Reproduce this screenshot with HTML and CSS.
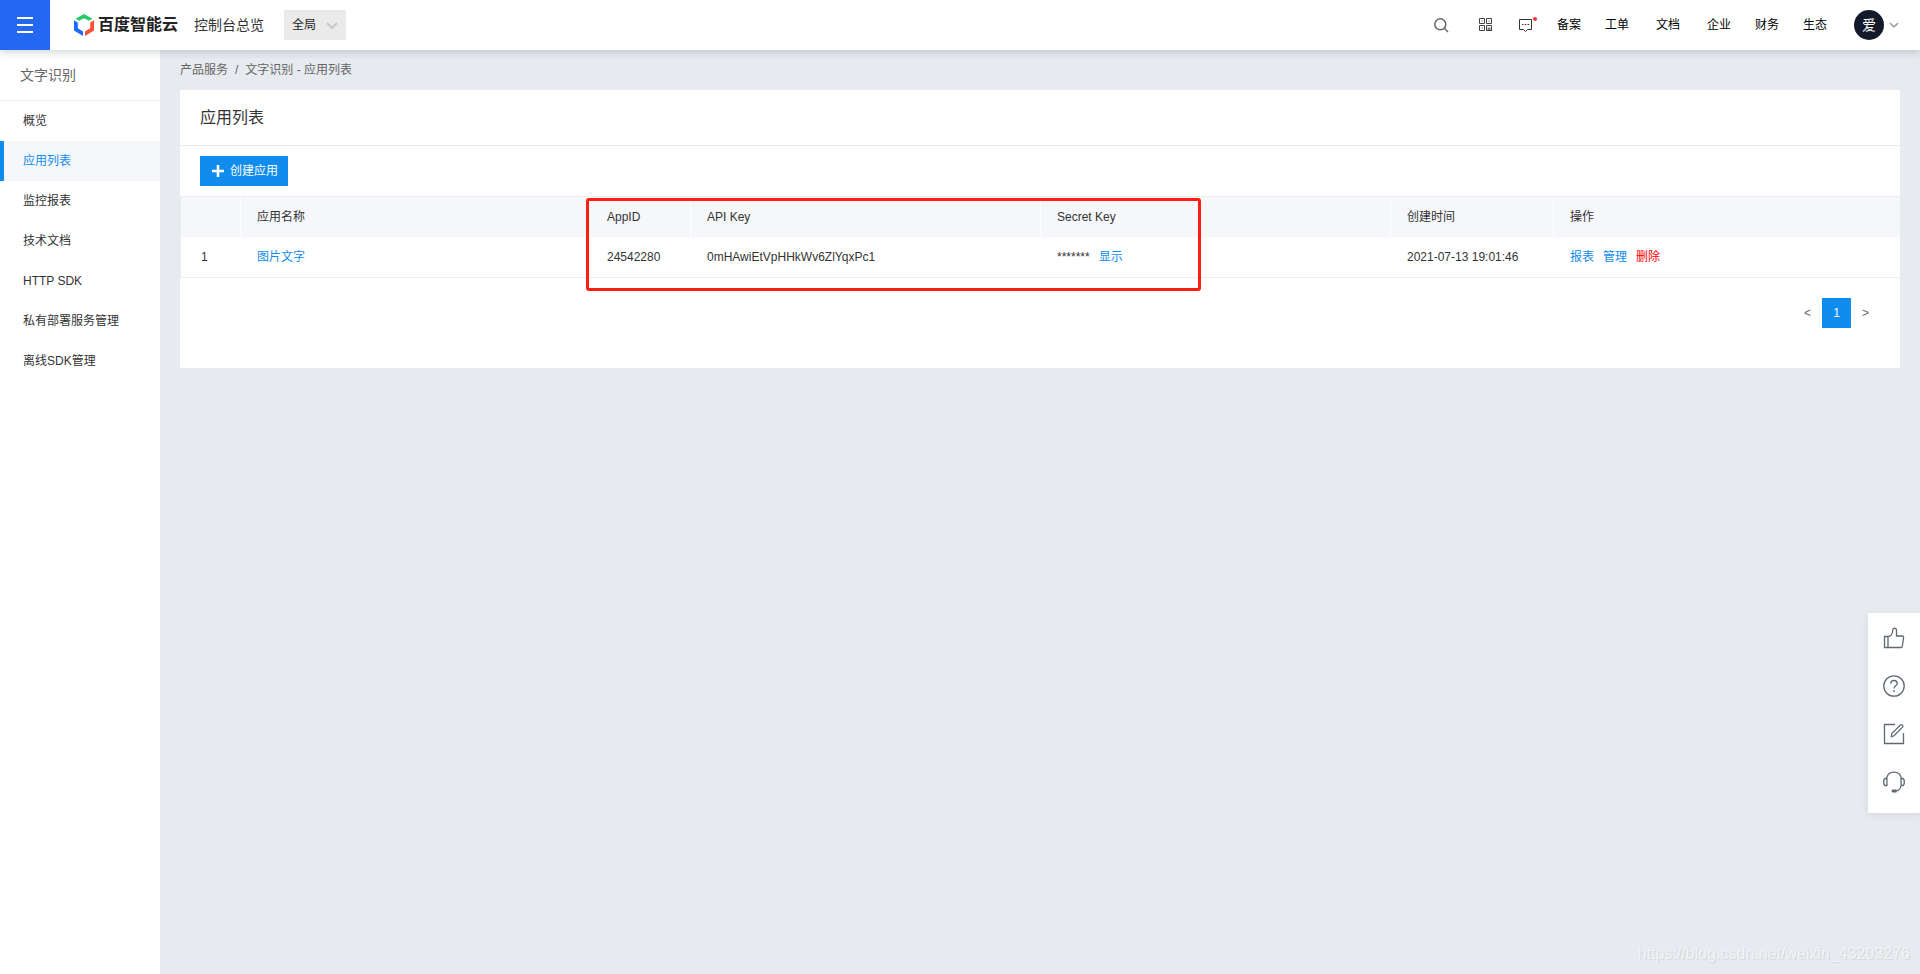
FILE: index.html
```html
<!DOCTYPE html>
<html lang="zh-CN">
<head>
<meta charset="utf-8">
<title>应用列表 - 百度智能云</title>
<link rel="stylesheet" href="styles.css">
</head>
<body>
<header class="topbar">
  <button class="menu-btn" type="button" aria-label="菜单">
    <svg width="18" height="18" viewBox="0 0 18 18" stroke="#fff" stroke-width="2"><path d="M1 2h16M1 9h16M1 16h16"/></svg>
  </button>
  <a class="logo" href="#">
    <svg width="20" height="22" viewBox="0 0 20 22"><path fill="#25cb69" d="M10 0l8.500 4.800-3.600 2L10 4.200 5.100 6.800l-3.600-2z"/><path fill="#1a6bff" d="M0 6.300l3.800 2.100v5.900l5.200 3.300V22L0 16.500z"/><path fill="#ff4f3a" d="M20 6.300l-3.800 2.100v5.900L11 17.600V22l9-5.500z"/></svg>
    <span>百度智能云</span>
  </a>
  <a class="overview" href="#">控制台总览</a>
  <div class="region">
    <select class="region-select" aria-label="区域"><option>全局</option></select>
    <svg class="region-arrow" width="12" height="8" viewBox="0 0 12 8" fill="none" stroke="#c8c8c8" stroke-width="2"><path d="M1 1l5 5 5-5"/></svg>
  </div>
  <nav class="top-nav">
    <button class="icon-btn search" type="button" aria-label="搜索">
      <svg width="15" height="15" viewBox="0 0 15 15" fill="none" stroke="#666" stroke-width="1.500"><circle cx="6.300" cy="6.300" r="5.500"/><path d="M10.300 10.300l3.700 3.700"/></svg>
    </button>
    <button class="icon-btn grid" type="button" aria-label="二维码">
      <svg width="14" height="14" viewBox="0 0 14 14" fill="none" stroke="#444"><path d="M.5.5h5v5h-5zM7.500.5h5v5h-5zM.5 7.500h5v5h-5zM2.500 3h1M9.500 3h1M2.500 10h1M7.500 13V7.500h5V13M7 12.500h6M9.200 9.500v3M10.800 9.500v3"/></svg>
    </button>
    <button class="icon-btn message" type="button" aria-label="消息">
      <svg width="20" height="18" viewBox="0 0 20 18"><path fill="none" stroke="#333" d="M.5 3.500h12v10H8.500l-2 2-2-2h-4z"/><path stroke="#333" d="M3 8.500h1.500M5.800 8.500h1.500M8.600 8.500h1.500"/><circle cx="16" cy="3" r="2" fill="#f33"/></svg>
    </button>
    <a href="#">备案</a><a href="#">工单</a><a class="wide" href="#">文档</a><a href="#">企业</a><a href="#">财务</a><a href="#">生态</a>
    <button class="user" type="button"><span class="avatar">爱</span>
      <svg width="10" height="7" viewBox="0 0 10 7" fill="none" stroke="#999" stroke-width="1.500"><path d="M1 1l4 4 4-4"/></svg>
    </button>
  </nav>
</header>
<div class="layout">
  <aside class="sidebar">
    <h2 class="side-title">文字识别</h2>
    <nav class="side-nav">
      <a href="#">概览</a>
      <a class="active" href="#">应用列表</a>
      <a href="#">监控报表</a>
      <a href="#">技术文档</a>
      <a href="#">HTTP SDK</a>
      <a href="#">私有部署服务管理</a>
      <a href="#">离线SDK管理</a>
    </nav>
  </aside>
  <main class="content">
    <div class="crumbs"><a href="#">产品服务</a><span>/</span><span>文字识别 - 应用列表</span></div>
    <section class="card">
      <h1 class="card-title">应用列表</h1>
      <div class="toolbar">
        <button class="create" type="button">
          <svg width="12" height="12" viewBox="0 0 12 12" stroke="#fff" stroke-width="2.600"><path d="M6 0v12M0 6h12"/></svg>
          <span>创建应用</span>
        </button>
      </div>
      <div class="table-wrap">
        <table class="apps">
          <colgroup><col class="c-index"><col class="c-wide"><col class="c-id"><col class="c-wide"><col class="c-wide"><col class="c-time"><col></colgroup>
          <thead><tr><th></th><th>应用名称</th><th>AppID</th><th>API Key</th><th>Secret Key</th><th>创建时间</th><th>操作</th></tr></thead>
          <tbody><tr><td class="index">1</td><td><a href="#">图片文字</a></td><td>24542280</td><td>0mHAwiEtVpHHkWv6ZlYqxPc1</td>
            <td><span class="actions"><span>*******</span><a href="#">显示</a></span></td><td>2021-07-13 19:01:46</td>
            <td><span class="actions"><a href="#">报表</a><a href="#">管理</a><a class="danger" href="#">删除</a></span></td></tr></tbody>
        </table>
        <div class="highlight"></div>
      </div>
      <div class="pager">
        <button type="button">&lt;</button><button class="current" type="button">1</button><button type="button">&gt;</button>
      </div>
    </section>
  </main>
</div>
<div class="float-tools">
  <button type="button" aria-label="点赞"><svg width="22" height="22" viewBox="0 0 22 22"><path d="M1.500 9.500h3.500v11H1.500zM5 20.500h13c.8 0 1.200-.4 1.300-1l1.300-9c.1-.9-.4-1.500-1.300-1.500H13.500V3.500C13.500 2 12.800 1.200 11.500 1.200S9.800 2 9.700 3.500C9.500 7 7.500 9.500 5 9.500"/></svg></button>
  <button type="button" aria-label="帮助"><svg width="22" height="22" viewBox="0 0 22 22"><circle cx="11" cy="11" r="10.200"/><path d="M7.800 8.700c0-2 1.300-3.200 3.200-3.200s3.200 1.200 3.200 2.900c0 2.300-3.200 2.600-3.200 5.200M11 15v2"/></svg></button>
  <button type="button" aria-label="反馈"><svg width="22" height="22" viewBox="0 0 22 22"><path d="M12 1.500H1.500v19h19V10M8.300 13.800l.5-3.200 8.400-8.400c.7-.7 1.600-.7 2.200 0 .7.600.7 1.500 0 2.200l-8.400 8.400z"/></svg></button>
  <button type="button" aria-label="客服"><svg width="22" height="22" viewBox="0 0 22 22"><path d="M3.500 7.500C4.300 3.500 7.300 1.200 11 1.200s6.700 2.300 7.500 6.300M3.900 7.500H2L.8 9v4L2 14.500h1.900zM18.100 7.500H20L21.200 9v4L20 14.500h-1.900zM18.100 14.500c-.6 3.200-2.300 5.200-5.100 5.500"/><path class="solid" d="M10 18.500h3.500v3H10c-2 0-2-3 0-3z"/></svg></button>
</div>
<div class="watermark">https://blog.csdn.net/weixin_43203276</div>
</body>
</html>
```
FILE: styles.css
```css
* { box-sizing: border-box; }
body {
  margin: 0;
  min-height: 100vh;
  display: flex;
  flex-direction: column;
  background: #e7eaef;
  color: #333;
  font: 12px/20px "Liberation Sans", "Noto Sans CJK SC", sans-serif;
}
a { color: #108cee; text-decoration: none; }
button { border: 0; padding: 0; background: none; color: inherit; font: inherit; cursor: pointer; }
svg { display: block; flex: none; }

.topbar {
  position: relative;
  z-index: 2;
  display: flex;
  align-items: center;
  height: 50px;
  background: #fff;
  box-shadow: 0 2px 8px rgba(40, 60, 70, .22);
}
.menu-btn {
  display: flex;
  align-items: center;
  justify-content: center;
  width: 50px;
  height: 50px;
  background: #2468f2;
}
.logo {
  display: flex;
  align-items: center;
  gap: 4px;
  margin-left: 24px;
  color: #222;
  font-size: 16px;
  font-weight: 700;
}
.overview { margin-left: 16px; color: #333; font-size: 14px; }
.region { position: relative; margin-left: 20px; }
.region-select {
  display: block;
  width: 62px;
  height: 30px;
  padding: 0 8px;
  border: 0;
  border-radius: 0;
  appearance: none;
  background: #eaeaea;
  color: #222;
  font: inherit;
}
.region-arrow { position: absolute; right: 8px; top: 12px; pointer-events: none; }

.top-nav { display: flex; align-items: center; gap: 24px; margin-left: auto; padding-right: 21px; }
.top-nav a { color: #000; }
.top-nav .wide { padding: 0 3px; }
.search { margin-right: 6px; }
.grid { margin-right: 2px; }
.message { margin-right: -6px; }
.user { display: flex; align-items: center; gap: 5px; margin-left: 3px; }
.avatar {
  width: 30px;
  border-radius: 50%;
  background: #14192b;
  color: #fff;
  font-size: 14px;
  line-height: 30px;
}

.layout { display: flex; flex: 1; }
.sidebar { flex: none; width: 160px; background: #fff; }
.side-title {
  margin: 0;
  padding: 0 20px;
  border-bottom: 1px solid #e8ebf0;
  color: #666;
  font-size: 14px;
  font-weight: 400;
  line-height: 50px;
}
.side-nav a { display: block; padding-left: 19px; border-left: 4px solid transparent; color: #333; line-height: 40px; }
.side-nav .active { border-color: #108cee; background: #f5f7fa; color: #108cee; }

.content { flex: 1; min-width: 0; padding: 0 20px; }
.crumbs { display: flex; gap: 7px; color: #666; line-height: 40px; }
.crumbs a { color: #666; }
.card { padding-bottom: 40px; background: #fff; }
.card-title {
  margin: 0;
  padding: 0 20px;
  border-bottom: 1px solid #e8e9eb;
  font-size: 16px;
  font-weight: 400;
  line-height: 55px;
}
.toolbar { padding: 10px 20px; }
.create {
  display: flex;
  align-items: center;
  gap: 6px;
  height: 30px;
  padding: 0 10px 0 12px;
  background: #108cee;
  color: #fff;
}
.table-wrap { position: relative; }
.apps {
  width: 100%;
  table-layout: fixed;
  border-spacing: 0;
  border: 1px solid #ebedf0;
  border-right: 0;
}
.apps th, .apps td { height: 40px; padding: 0 16px; font-weight: 400; text-align: left; white-space: nowrap; }
.apps th { background: #f5f7fa; }
.apps th + th { border-left: 1px solid #fff; }
.apps td + td { border-left: 1px solid transparent; }
.apps .index { padding-left: 20px; }
.c-index { width: 59px; }
.c-wide { width: 350px; }
.c-id { width: 100px; }
.c-time { width: 163px; }
.actions { display: flex; gap: 9px; }
.apps .danger { color: #f00; }
.highlight {
  position: absolute;
  left: 406px;
  top: 2px;
  width: 615px;
  height: 93px;
  border: 3px solid #ff1e12;
  border-radius: 3px;
  pointer-events: none;
}
.pager { display: flex; justify-content: flex-end; padding: 20px 20px 0; }
.pager button { width: 29px; height: 30px; color: #666; }
.pager .current { background: #108cee; color: #fff; }

.float-tools {
  position: fixed;
  right: 0;
  top: 613px;
  display: flex;
  flex-direction: column;
  gap: 26px;
  width: 52px;
  padding: 14px 15px 20px;
  background: #fff;
  box-shadow: 0 2px 8px rgba(0, 0, 0, .08);
}
.float-tools svg { fill: none; stroke: #606872; stroke-width: 1.3; }
.float-tools .solid { fill: #606872; stroke: none; }
.watermark {
  position: fixed;
  right: 10px;
  bottom: 10px;
  color: #f1f3f5;
  font-size: 16px;
  text-shadow: 1px 1px 1px #d2d6da;
}
```
